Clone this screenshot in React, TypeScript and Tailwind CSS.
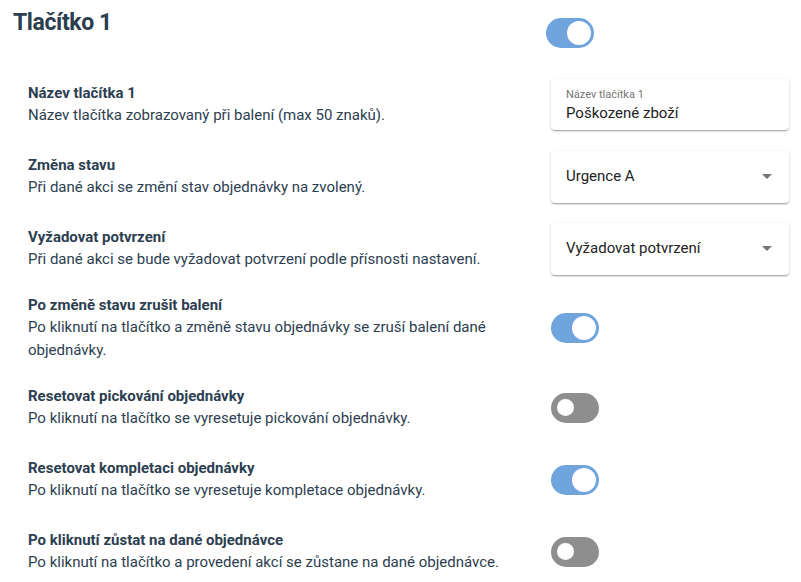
import React from 'react';

type Row = {
    title: string;
    desc: string;
    control: React.ReactNode;
};

const Toggle = ({ on }: { on: boolean }) => (
    <div
        className={`flex h-[30px] w-[48px] shrink-0 items-center rounded-full ${
            on ? 'bg-[#6fa4dc] justify-end pr-[3px]' : 'bg-[#8e8e8e] justify-start pl-[6px]'
        }`}
    >
        <span className={`block rounded-full bg-white ${on ? 'h-[24px] w-[24px]' : 'h-[17px] w-[17px]'}`} />
    </div>
);

const Card = ({ children }: { children: React.ReactNode }) => (
    <div className="w-[238px] rounded-[4px] bg-white shadow-[0_1px_3px_rgba(0,0,0,0.2),0_1px_1px_rgba(0,0,0,0.14),0_2px_1px_-1px_rgba(0,0,0,0.12)]">
        {children}
    </div>
);

const Select = ({ value }: { value: string }) => (
    <Card>
        <div className="flex h-[52px] items-center justify-between pl-[15px] pr-[17px]">
            <span className="text-[15px] text-[#222]">{value}</span>
            <span className="h-0 w-0 border-x-[5px] border-t-[5px] border-x-transparent border-t-[#757575]" />
        </div>
    </Card>
);

export default function App() {
    const rows: Row[] = [
        {
            title: 'Název tlačítka 1',
            desc: 'Název tlačítka zobrazovaný při balení (max 50 znaků).',
            control: (
                <Card>
                    <div className="flex h-[51px] flex-col justify-center pl-[15px] pt-[3px]">
                        <span className="text-[11px] leading-[14px] text-[#757575]">Název tlačítka 1</span>
                        <span className="text-[15px] leading-[22px] text-[#222]">Poškozené zboží</span>
                    </div>
                </Card>
            ),
        },
        {
            title: 'Změna stavu',
            desc: 'Při dané akci se změní stav objednávky na zvolený.',
            control: <Select value="Urgence A" />,
        },
        {
            title: 'Vyžadovat potvrzení',
            desc: 'Při dané akci se bude vyžadovat potvrzení podle přísnosti nastavení.',
            control: <Select value="Vyžadovat potvrzení" />,
        },
        {
            title: 'Po změně stavu zrušit balení',
            desc: 'Po kliknutí na tlačítko a změně stavu objednávky se zruší balení dané objednávky.',
            control: <Toggle on />,
        },
        {
            title: 'Resetovat pickování objednávky',
            desc: 'Po kliknutí na tlačítko se vyresetuje pickování objednávky.',
            control: <Toggle on={false} />,
        },
        {
            title: 'Resetovat kompletaci objednávky',
            desc: 'Po kliknutí na tlačítko se vyresetuje kompletace objednávky.',
            control: <Toggle on />,
        },
        {
            title: 'Po kliknutí zůstat na dané objednávce',
            desc: 'Po kliknutí na tlačítko a provedení akcí se zůstane na dané objednávce.',
            control: <Toggle on={false} />,
        },
    ];

    return (
        <div className="min-h-[582px] w-[801px] bg-white font-['Roboto','Liberation_Sans',sans-serif] text-[#2c3e50]">
            {/* Header */}
            <div className="flex items-start pl-[13px] pt-[6px]">
                <h1 className="w-[533px] text-[23px] font-bold leading-[34px] tracking-[-0.4px]">Tlačítko 1</h1>
                <div className="pt-[12px]">
                    <Toggle on />
                </div>
            </div>

            {/* Settings */}
            <div className="mt-[30px] flex flex-col gap-[19px] pl-[28px] pr-[12px]">
                {rows.map((r) => (
                    <div key={r.title} className="flex min-h-[53px] items-center justify-between">
                        <div className="w-[500px]">
                            <div className="text-[15px] font-bold leading-[22px]">{r.title}</div>
                            <div className="text-[15px] leading-[23px]">{r.desc}</div>
                        </div>
                        <div className="flex w-[238px] justify-start">{r.control}</div>
                    </div>
                ))}
            </div>
        </div>
    );
}
